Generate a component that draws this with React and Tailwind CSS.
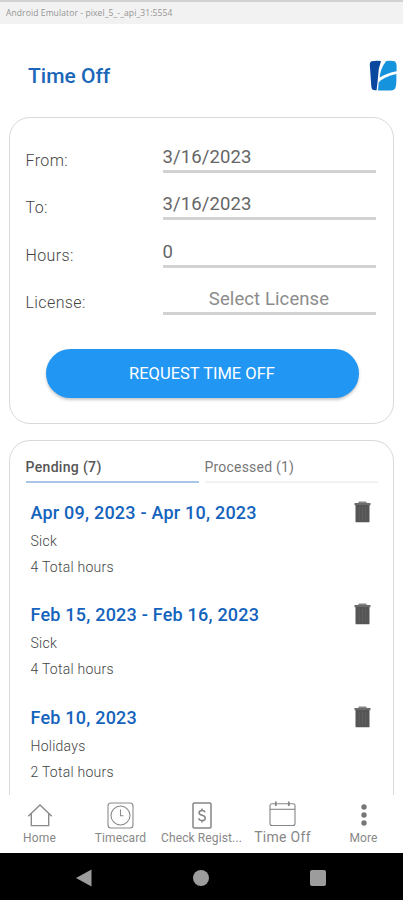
import { useState } from 'react'
import clsx from 'clsx'

const fields = [
  { label: 'From:',    value: '3/16/2023' },
  { label: 'To:',      value: '3/16/2023' },
  { label: 'Hours:',   value: '0' },
  { label: 'License:', value: 'Select License', placeholder: true },
]

const pending = [
  { dates: 'Apr 09, 2023 - Apr 10, 2023', type: 'Sick',     hours: 4 },
  { dates: 'Feb 15, 2023 - Feb 16, 2023', type: 'Sick',     hours: 4 },
  { dates: 'Feb 10, 2023',                type: 'Holidays', hours: 2 },
]

const processed = [
  { dates: 'Jan 03, 2023', type: 'Sick', hours: 8 },
]

function Logo() {
  return (
    <svg width="28" height="32" viewBox="0 0 28 32">
      <path d="M2.6 1.2Q8 .4 12 1L9.8 9L9 17.5L7.6 30.2Q4.6 30.6 3.4 29.6Q2.2 28.6 2 22L.8 5Q.8 1.6 2.6 1.2Z" fill="#0a48a0" />
      <path d="M10.6 17.6Q11.6 8 17.2 1Q24 .4 26 1.4Q27.6 2.4 27.6 6V11.2Q18 13 10.6 17.6Z" fill="#1593dc" />
      <path d="M9.6 22.4Q15 16.6 27.4 14Q27.6 24.6 26.4 28Q25.4 30.4 21.5 30.4H9Z" fill="#1593dc" />
    </svg>
  )
}

function TrashIcon() {
  return (
    <svg width="17" height="22" viewBox="0 0 17 22">
      <path d="M4.5 2.2V1.2Q4.5.6 5.2.6H11.8Q12.5.6 12.5 1.2V2.2Z" fill="#858585" />
      <path d="M.5 2H16.5V4.2H.5Z" fill="#6b6b6b" />
      <path d="M1.5 4H15.5V20.4Q15.5 21.3 14.6 21.3H2.4Q1.5 21.3 1.5 20.4Z" fill="#555" />
      <path d="M5.2 6V19.5M8.5 6V19.5M11.8 6V19.5" stroke="#606060" strokeWidth="1" />
    </svg>
  )
}

function HomeIcon() {
  return (
    <svg width="26" height="24" viewBox="0 0 26 24" fill="none" stroke="#8a8a8a" strokeWidth="1.4">
      <path d="M1.2 13.2L13 2L24.8 13.2M4.3 10.4V22.6H21.7V10.4" />
    </svg>
  )
}

function ClockIcon() {
  return (
    <svg width="27" height="27" viewBox="0 0 27 27" fill="none" stroke="#8a8a8a" strokeWidth="1.1">
      <rect x="1" y="1" width="25" height="25" rx="3" />
      <circle cx="13.5" cy="13.5" r="9.5" />
      <path d="M13.5 7.5V13.8H16.5" />
    </svg>
  )
}

function CheckIcon() {
  return (
    <svg width="20" height="27" viewBox="0 0 20 27" fill="none" stroke="#858585" strokeWidth="1.5">
      <rect x="1" y="1" width="18" height="25" rx="1.2" />
      <path d="M13 10.3Q12.6 8.4 10 8.4Q7.1 8.4 7.1 10.7Q7.1 12.6 10 13.3Q13.2 14 13.2 16.2Q13.2 18.6 10 18.6Q7 18.6 6.8 16.3M10 6.5V8.4M10 18.6V20.6" strokeWidth="1.5" />
    </svg>
  )
}

function CalendarIcon() {
  return (
    <svg width="27" height="28" viewBox="0 0 27 28" fill="none" stroke="#858585" strokeWidth="1.1">
      <rect x="1" y="2.7" width="25" height="21.8" rx="2" />
      <path d="M1 8.3H26" />
      <path d="M6.8 .5V5M19.8 .5V5" strokeWidth="1.8" />
    </svg>
  )
}

function MoreIcon() {
  return (
    <svg width="8" height="24" viewBox="0 0 8 24" fill="#777">
      <circle cx="4" cy="4" r="2.7" />
      <circle cx="4" cy="12" r="2.7" />
      <circle cx="4" cy="20" r="2.7" />
    </svg>
  )
}

const tabs = [
  { label: 'Home',            icon: HomeIcon },
  { label: 'Timecard',        icon: ClockIcon },
  { label: 'Check Regist...', icon: CheckIcon },
  { label: 'Time Off',        icon: CalendarIcon, active: true },
  { label: 'More',            icon: MoreIcon },
]

export default function App() {
  const [tab, setTab] = useState('pending')
  const requests = tab === 'pending' ? pending : processed

  return (
    <div className="flex h-[900px] w-[403px] flex-col overflow-hidden bg-white font-['Roboto',sans-serif] whitespace-nowrap">
      {/* Emulator title bar */}
      <div className="h-6 shrink-0 border-t-2 border-[#d2d2d2] bg-[#f2f2f2] pl-1.5 font-['Open_Sans',sans-serif] text-[8.5px] leading-[21px] tracking-[0.11px] text-[#949494]">
        Android Emulator - pixel_5_-_api_31:5554
      </div>

      <header className="flex h-[93px] shrink-0 items-center justify-between pt-2.5 pr-1.5 pl-7">
        <h1 className="text-[21px] leading-6 font-medium text-[#1b66b8]">Time Off</h1>
        <Logo />
      </header>

      {/* Request form */}
      <section className="mx-[9px] h-[307px] shrink-0 rounded-[21px] border border-[#d9d9d9] px-[15.5px] pt-[7px]">
        {fields.map((f) => (
          <div key={f.label} className="flex h-[47.5px] items-end pr-0.5">
            <span className="w-[137px] pb-0.5 text-base leading-5 font-light tracking-[0.4px] text-[#444]">{f.label}</span>
            <span
              className={clsx(
                'h-7 flex-1 border-b-[3px] border-[#d2d2d2] text-[18.5px] leading-[25px] tracking-[0.1px]',
                f.placeholder ? 'text-center text-[#8c8c8c]' : 'text-[#666]'
              )}
            >
              {f.value}
            </span>
          </div>
        ))}
        <button className="mt-[34px] ml-5 block h-[49px] w-[313px] rounded-full bg-[#2196f3] pt-0.5 text-[16.5px] text-white shadow-[0_2px_3px_rgba(0,0,0,0.22)]">
          REQUEST TIME OFF
        </button>
      </section>

      {/* Requests */}
      <section className="mx-[9px] mt-4 min-h-0 flex-1 overflow-hidden rounded-t-[21px] border border-b-0 border-[#d9d9d9] px-[15.5px]">
        <div className="flex gap-1.5 pt-3.5 text-left text-sm leading-[23px]">
          <button
            onClick={() => setTab('pending')}
            className={clsx('h-7 w-[174px] border-b-2 pb-0.5 text-left tracking-[0.33px]', tab === 'pending' ? 'border-[#a9c6e8] font-medium text-[#555]' : 'border-[#f2f2f2] text-[#777]')}
          >
            Pending (7)
          </button>
          <button
            onClick={() => setTab('processed')}
            className={clsx('h-7 w-[174px] border-b-2 pb-0.5 text-left tracking-[0.2px]', tab === 'processed' ? 'border-[#a9c6e8] font-medium text-[#555]' : 'border-[#f2f2f2] text-[#777]')}
          >
            Processed (1)
          </button>
        </div>
        {requests.map((r) => (
          <div key={r.dates} className="flex h-[102.5px] justify-between pt-[17.5px] pr-[7px] pl-[5px]">
            <div className="text-sm font-light tracking-[0.25px] text-[#444]">
              <p className="text-[18px] leading-6 font-medium tracking-[0.22px] text-[#1463bd]">{r.dates}</p>
              <p className="mt-[3px] leading-[26px]">{r.type}</p>
              <p className="leading-[26px]">{r.hours} Total hours</p>
            </div>
            <TrashIcon />
          </div>
        ))}
      </section>

      {/* Tab bar */}
      <nav className="-ml-px flex h-[58px] shrink-0 bg-white">
        {tabs.map(({ label, icon: Icon, active }) => (
          <div key={label} className="flex w-[81px] shrink-0 flex-col items-center pt-1.5">
            <div className="flex h-7 items-center"><Icon /></div>
            <span
              className={clsx(
                'leading-4 text-[#888]',
                active ? 'text-sm tracking-[0.3px]' : 'mt-px text-xs tracking-[0.12px]'
              )}
            >
              {label}
            </span>
          </div>
        ))}
      </nav>

      {/* System navigation */}
      <div className="flex h-[47px] shrink-0 items-center justify-between bg-black pt-0.5 pr-[77px] pl-[76px]">
        <svg width="16" height="18" viewBox="0 0 16 18"><path d="M0 9L15.5 .5V17.5Z" fill="#9c9c9c" /></svg>
        <span className="size-4 rounded-full bg-[#9c9c9c]" />
        <span className="size-4 rounded-xs bg-[#9c9c9c]" />
      </div>
    </div>
  )
}
